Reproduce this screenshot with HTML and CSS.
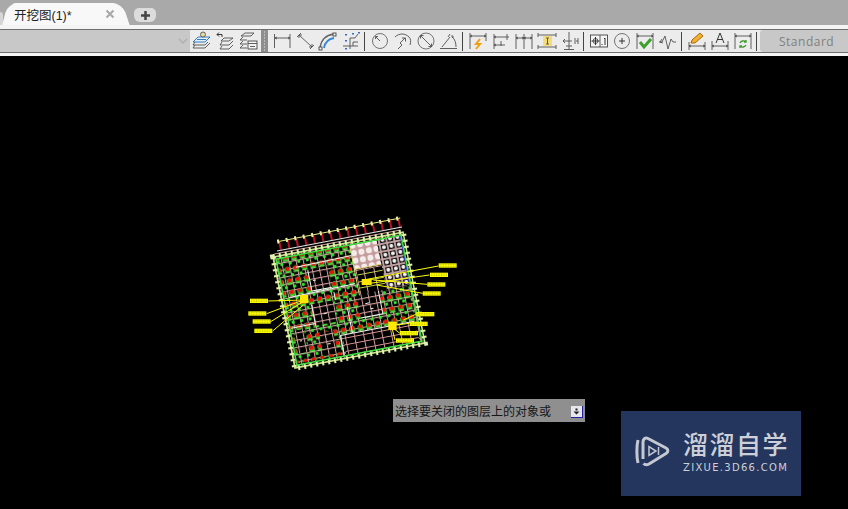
FILE: index.html
```html
<!DOCTYPE html>
<html lang="en">
<head>
    <meta charset="UTF-8">
    <meta name="viewport" content="width=device-width, initial-scale=1.0">
    <title>开挖图(1)</title>
    <link rel="stylesheet" href="styles.css">
</head>
<body>
    <!-- Drawing tabs -->
    <div class="tab-bar">
        <div class="tab-prev"></div>
        <div class="tab">
            <span class="tab-title">开挖图(1)*</span>
            <svg class="tab-close" width="10" height="10" viewBox="0 0 10 10"><path d="M1.500 1.500l7 7M8.500 1.500l-7 7"/></svg>
        </div>
        <div class="tab-add">
            <svg width="11" height="11" viewBox="0 0 11 11"><path d="M5.500 1v9M1 5.500h9"/></svg>
        </div>
    </div>

    <!-- Toolbar -->
    <div class="tool-strip">
        <div class="toolbar">
            <div class="combo">
                <svg width="10" height="6" viewBox="0 0 10 6"><path d="M1 1l4 4 4-4"/></svg>
            </div>

            <div class="tool"><svg viewBox="0 0 20 20">
                <path class="dk" d="M3 14L1 17h12l5-5M3 11L1 14h12l3-3"/>
                <path class="bl" d="M6 6L1 11h12l5-5zM5 8.500h9"/>
                <circle class="ac" cx="11" cy="3.500" r="2.500"/>
            </svg></div>
            <div class="tool"><svg viewBox="0 0 20 20">
                <path class="dk" d="M9 7h9l-4 3H6zM7 11l-2 3h9l4-4M7 15l-2 3h9l4-4"/>
                <path class="bk" d="M7 3.500H2M4 1.500l-2 2 2 2M7 3.500V6"/>
            </svg></div>
            <div class="tool"><svg viewBox="0 0 20 20">
                <path class="dk" d="M7 2h9l-3 3H3zM5 6L2 9h7M5 10l-3 3h7M5 14l-3 3h7"/>
                <rect class="bx" x="10" y="10" width="9" height="8"/>
                <path class="dk" d="M10 12.500h9M12 15.500h5"/>
            </svg></div>

            <div class="grip"></div>

            <div class="tool"><svg viewBox="0 0 20 20"><path class="dk" d="M2.500 3v14M18 3v14M3 7h15M5 6L3 7l2 1M16 6l2 1-2 1"/></svg></div>
            <div class="tool"><svg viewBox="0 0 20 20"><path class="dk" d="M6 2L2 6M19 14l-4 4M4 4l13 12M4 7V4h3M14 16h3v-3"/></svg></div>
            <div class="tool"><svg viewBox="0 0 20 20">
                <path class="gr" d="M2 17C3 9 8 4 16 3"/>
                <path class="bl2" d="M6 17C7 11 10 8 16 7"/>
                <rect class="bx" x="15" y="2" width="3" height="3"/>
                <rect class="bx" x="1" y="16" width="3" height="3"/>
            </svg></div>
            <div class="tool"><svg viewBox="0 0 20 20">
                <path class="dk" d="M2 15h15M9 18V7h5l3-4M12 15v-4h5"/>
                <path class="dots" d="M5 3v1.500M5 9v1.500M5 17v1.500M12 2v1.500M18 1v1.500"/>
            </svg></div>

            <div class="sep"></div>

            <div class="tool"><svg viewBox="0 0 20 20"><circle class="gy" cx="10" cy="10" r="7.500"/><path class="dk" d="M10 10L5.500 5.500M5.500 8V5.500H8"/></svg></div>
            <div class="tool"><svg viewBox="0 0 20 20"><path class="dk" d="M2 6C6 2 12 2 16 6c2 2 2 5 1 8M5 18l4-4-2-2 5-5M9 7h3.500v3.500"/></svg></div>
            <div class="tool"><svg viewBox="0 0 20 20"><circle class="gy" cx="10" cy="10" r="8"/><path class="dk" d="M4.500 4.500l11 11M4.500 7.500v-3h3M15.500 12.500v3h-3"/></svg></div>
            <div class="tool"><svg viewBox="0 0 20 20"><path class="dk" d="M1 17.500h17M3 16L11 6M11 3L9 6M13 6c3 2 4 6 4 10M12 5h2v2"/></svg></div>

            <div class="sep"></div>

            <div class="tool"><svg viewBox="0 0 20 20">
                <path class="dk" d="M2 2v16M18 2v8M2 5h16M4 4L2 5l2 1M16 4l2 1-2 1"/>
                <path class="or" d="M12 8l-4 5h4l-4 5"/>
            </svg></div>
            <div class="tool"><svg viewBox="0 0 20 20"><path class="dk" d="M3 3v15M16 3v6M3 6h15M3 14h11M10 10v5M5 5L3 6l2 1M5 13l-2 1 2 1"/></svg></div>
            <div class="tool"><svg viewBox="0 0 20 20"><path class="dk" d="M2 3v15M10 3v15M18 3v15M2 7h16M4 6L2 7l2 1M8 6l2 1-2 1M12 6l-2 1 2 1M16 6l2 1-2 1"/></svg></div>
            <div class="tool"><svg viewBox="0 0 20 20">
                <path class="dk" d="M1 4h18M1 16h18M1 2v4M19 2v4M1 14v4M19 14v4"/>
                <rect class="yl" x="6" y="5" width="9" height="10"/>
                <path class="dk" d="M9 7h3M10.500 7v6M9 13h3"/>
            </svg></div>
            <div class="tool"><svg viewBox="0 0 20 20"><path class="dk" d="M9 1v18M4 18.500h10M9 10H3M5 8l-2 2 2 2M9 10h3M15 7v6M18 7v6M16 10h2M6 15h6"/></svg></div>

            <div class="sep"></div>

            <div class="tool"><svg viewBox="0 0 20 20">
                <rect class="bx" x="1.500" y="4" width="17" height="12"/>
                <path class="dk" d="M11 4v12"/>
                <circle class="dk" cx="6.500" cy="10" r="2.500"/>
                <path class="bk" d="M2.500 10h8M6.500 6v8M13 14v-1M16 7v7M15 8l1-1"/>
            </svg></div>
            <div class="tool"><svg viewBox="0 0 20 20"><circle class="gy" cx="10" cy="10" r="7.500"/><path class="bk" d="M10 7v6M7 10h6"/></svg></div>
            <div class="tool"><svg viewBox="0 0 20 20">
                <path class="dk" d="M2 2v16M18 2v16M2 5h16M4 4L2 5l2 1M16 4l2 1-2 1"/>
                <path class="ck" d="M5 11l4 5 7-8"/>
            </svg></div>
            <div class="tool"><svg viewBox="0 0 20 20"><path class="dk" d="M1 11h3l3-6 3 13 3-10 2 3h3M4 8l-2 3 3 1"/></svg></div>

            <div class="sep"></div>

            <div class="tool"><svg viewBox="0 0 20 20">
                <path class="dk" d="M2 11v8M18 11v8M2 15h16M4 14l-2 1 2 1M16 14l2 1-2 1"/>
                <path class="pen" d="M4 12l1-3 8-7 3 3-8 7z"/>
            </svg></div>
            <div class="tool"><svg viewBox="0 0 20 20"><path class="dk" d="M2 10v9M18 10v9M2 15h16M4 14l-2 1 2 1M16 14l2 1-2 1"/><path class="bk" d="M6 12L10 2l4 10M7.500 8.500h5"/></svg></div>
            <div class="tool"><svg viewBox="0 0 20 20">
                <path class="dk" d="M2 2v16M18 2v16M2 5h16M4 4L2 5l2 1M16 4l2 1-2 1"/>
                <path class="ck2" d="M7 12c1-2 4-3 6-1M13 9v2h-2M13 14c-1 2-4 3-6 1M7 17v-2h2"/>
            </svg></div>

            <div class="sep"></div>

            <div class="style-box">Standard</div>
        </div>
    </div>

    <!-- Model space -->
    <div class="canvas">
        <svg class="drawing" width="230" height="175" viewBox="0 0 690 525">
            <defs>
                <pattern id="grid" width="7" height="7" patternUnits="userSpaceOnUse">
                    <path d="M0 .5h7M.5 0v7" fill="none" stroke="#cf9c9c" stroke-width="1"/>
                </pattern>
                <pattern id="grid2" width="9" height="6.500" patternUnits="userSpaceOnUse">
                    <path d="M0 .5h9M.5 0v6.500" fill="none" stroke="#d49696" stroke-width="1"/>
                </pattern>
                <pattern id="nodes" width="8.500" height="11.500" patternUnits="userSpaceOnUse">
                    <circle cx="3" cy="3.500" r="3" fill="#22d422"/>
                    <rect x="1" y="1" width="4" height="3.500" fill="#ee0c0c"/>
                    <circle cx="7" cy="9" r="1.600" fill="#2bea2b"/>
                    <path d="M0 6.500h6" stroke="#a4f27a" stroke-width=".8"/>
                </pattern>
                <pattern id="pinkhatch" width="7.500" height="7.500" patternUnits="userSpaceOnUse">
                    <rect width="7.500" height="7.500" fill="#c49a9a"/>
                    <circle cx="3.700" cy="3.700" r="3" fill="#f4ecec"/>
                </pattern>
                <pattern id="darkhatch" width="7.500" height="7.500" patternUnits="userSpaceOnUse">
                    <rect width="7.500" height="7.500" fill="#bfa0a0"/>
                    <rect x="1" y="1" width="5.500" height="5.500" fill="#000"/>
                    <circle cx="3.700" cy="3.700" r="2" fill="#f0f0f0"/>
                </pattern>
                <g id="lbl">
                    <rect width="54" height="13" fill="#ffff00"/>
                    <path d="M3 4h48M3 9h48" stroke="#8a8a00" stroke-width="1.500" stroke-dasharray="3 2"/>
                </g>
            </defs>

            <!-- plan, sheared to follow the rotated view -->
            <g transform="matrix(3 -.576 .594 3 99 156)">
                <rect x="0" y="0" width="130" height="111" fill="#000"/>
                <rect x="0" y="0" width="130" height="111" fill="url(#grid)"/>
                <path d="M2 3h74v50h50v36H52v18H3z" fill="url(#nodes)"/>

                <g class="room">
                    <rect x="31" y="19" width="20" height="21"/>
                    <rect x="28" y="53" width="22" height="21"/>
                    <rect x="73" y="52" width="22" height="23"/>
                    <rect x="6" y="75" width="10" height="23"/>
                    <rect x="30" y="82" width="14" height="22"/>
                </g>
                <g class="room-grid">
                    <rect x="31" y="19" width="20" height="21"/>
                    <rect x="28" y="53" width="22" height="21"/>
                    <rect x="73" y="52" width="22" height="23"/>
                    <rect x="6" y="75" width="10" height="23"/>
                    <rect x="30" y="82" width="14" height="22"/>
                </g>
                <path class="flr" d="M34 30h3M38 64h3M80 62h4M84 68h3M36 94h3M10 86h2"/>
                <path class="wall" d="M8 42l66-1M20 14l56-1M52 45v8M62 62v26M4 72h24M31 19v21h20M28 53v21M95 52v23h-22"/>

                <rect x="52" y="88" width="73" height="20" fill="#000"/>
                <rect x="52" y="88" width="73" height="20" fill="url(#grid2)"/>
                <path class="wall" d="M50 88h74M50 88v20"/>

                <rect x="76" y="3" width="27" height="24" fill="url(#pinkhatch)"/>
                <rect x="103" y="3" width="23" height="49" fill="url(#darkhatch)"/>
                <path d="M127 3v50" stroke="#2222e0" stroke-width="1.800"/>
                <path d="M76 27h27M76 3v50" stroke="#e0d070" stroke-width="1"/>
                <rect x="78" y="29" width="25" height="23" fill="#000"/>
                <path d="M78 33h25M78 40h25M78 46h25" stroke="#c4d83a" stroke-width=".9"/>
                <path d="M85 29v23M95 29v23" stroke="#dba6a6" stroke-width=".9"/>

                <path d="M7 -14H130" stroke="#e4ec8c" stroke-width="1"/>
                <path d="M8 -9.500H130" stroke="#b80f24" stroke-width="8" stroke-dasharray="2 6.500"/>
                <path d="M7 -14H130" stroke="#eef0a0" stroke-width="4" stroke-dasharray="2 6.500"/>
                <path d="M5 -5H130" stroke="#e8e8e8" stroke-width="1"/>
                <path d="M2 -2.500H128" stroke="#cf9c9c" stroke-width="1"/>

                <rect x="0" y="0" width="130" height="111" fill="none" stroke="#cbe58d" stroke-width="1.500"/>
                <rect x="0" y="0" width="130" height="111" fill="none" stroke="#e2f2ac" stroke-width="5.500" stroke-dasharray="2 4"/>
                <rect x="2.500" y="2.500" width="125" height="106" fill="none" stroke="#3fe03f" stroke-width="1.500"/>
            </g>

            <!-- leaders and labels -->
            <path class="leader" d="M370 225L595 183M390 235L568 210M400 225L562 238M410 240L548 265M490 345L527 328M470 360L508 355M460 370L480 385M455 365L465 405M85 288L190 285M80 326L190 285M92 350L190 290M98 378L190 300"/>
            <path d="M365 222h30v18h-30zM445 350h25v25h-25zM180 270h25v25h-25z" fill="#ffe800"/>
            <use href="#lbl" x="596" y="175"/>
            <use href="#lbl" x="570" y="203"/>
            <use href="#lbl" x="562" y="232"/>
            <use href="#lbl" x="548" y="259"/>
            <use href="#lbl" x="529" y="321"/>
            <use href="#lbl" x="509" y="350"/>
            <use href="#lbl" x="480" y="378"/>
            <use href="#lbl" x="468" y="400"/>
            <use href="#lbl" x="30" y="281"/>
            <use href="#lbl" x="25" y="319"/>
            <use href="#lbl" x="38" y="343"/>
            <use href="#lbl" x="43" y="371"/>
        </svg>

        <div class="prompt">
            <span>选择要关闭的图层上的对象或</span>
            <svg width="12" height="12" viewBox="0 0 12 12">
                <rect width="12" height="12" fill="#2020a0"/>
                <rect width="11" height="11" fill="#e8e8ec"/>
                <path d="M4.500 2.500h2v2h-2zM2.500 5.500h6l-3 3z" fill="#222"/>
            </svg>
        </div>

        <div class="brand">
            <svg class="brand-logo" width="36" height="36" viewBox="0 0 36 36">
                <path d="M3 7C1.500 13 1.500 24 3 30"/>
                <path d="M8 26V9c0-3 2.500-5 5-3.500L31 15c2.500 1.500 2.500 4 0 5.500L14 31c-2 1-4 1-5.500-.5"/>
                <path class="brand-play" d="M14 13.500v9l7-4.500z"/>
                <path class="brand-play" d="M23.500 14v8"/>
            </svg>
            <div class="brand-text">
                <div class="brand-name">溜溜自学</div>
                <div class="brand-url">ZIXUE.3D66.COM</div>
            </div>
        </div>
    </div>
</body>
</html>
```

FILE: styles.css
```css
html, body {
    height: 100%;
}
body {
    margin: 0;
    padding: 0;
    display: flex;
    flex-direction: column;
    overflow: hidden;
    background-color: #000;
    font-family: "Liberation Sans", "Noto Sans CJK SC", sans-serif;
}

/* tabs */
.tab-bar {
    height: 25px;
    display: flex;
    align-items: flex-end;
    background-color: #a9a9a9;
}
.tab-prev {
    width: 3px;
    height: 13px;
    background-color: #d6d6d6;
    border-radius: 0 4px 0 0;
}
.tab {
    position: relative;
    width: 104px;
    height: 22px;
    margin-left: 9px;
    display: flex;
    align-items: center;
    justify-content: space-between;
    background-color: #f8f8f8;
    border-radius: 4px 4px 0 0;
}
.tab::before,
.tab::after {
    content: "";
    position: absolute;
    top: 0;
    bottom: 0;
    background-color: #f8f8f8;
}
.tab::before {
    left: -7px;
    width: 14px;
    border-radius: 10px 0 0 0;
    transform: skewX(-14deg);
}
.tab::after {
    right: -10px;
    width: 16px;
    border-radius: 0 10px 0 0;
    transform: skewX(18deg);
}
.tab-title {
    position: relative;
    z-index: 1;
    margin-left: 2px;
    font-size: 12.500px;
    color: #222;
    white-space: nowrap;
}
.tab-close {
    position: relative;
    z-index: 1;
    margin-right: 1px;
}
.tab-close path {
    fill: none;
    stroke: #a8a8a8;
    stroke-width: 2;
}
.tab-add {
    width: 22px;
    height: 14px;
    margin-left: 18px;
    margin-bottom: 3px;
    display: flex;
    align-items: center;
    justify-content: center;
    background-color: #dcdcdc;
    border-radius: 5px 5px 6px 6px;
}
.tab-add path {
    fill: none;
    stroke: #444;
    stroke-width: 2.500;
}

/* toolbar */
.tool-strip {
    height: 31px;
    box-sizing: border-box;
    padding: 4px 0 3px;
    background-color: #f4f4f4;
}
.toolbar {
    height: 24px;
    box-sizing: border-box;
    display: flex;
    align-items: center;
    background-color: #ececec;
    border-top: 1px solid #6e6e6e;
    border-bottom: 1px solid #6e6e6e;
}
.combo {
    width: 190px;
    height: 100%;
    box-sizing: border-box;
    padding-right: 2px;
    display: flex;
    align-items: center;
    justify-content: flex-end;
    background-color: #c8c8c8;
}
.combo path {
    fill: none;
    stroke: #b0b0b0;
    stroke-width: 1.500;
}
.tool {
    width: 23px;
    height: 20px;
    display: flex;
    align-items: center;
    justify-content: center;
}
.tool svg {
    width: 20px;
    height: 20px;
    fill: none;
    stroke-width: .9;
}
.grip {
    width: 7px;
    height: 100%;
    margin: 0 2px;
    background-color: #8e8e8e;
    background-image: radial-gradient(#e8e8e8 35%, transparent 40%);
    background-size: 3px 3px;
    background-position: center;
    background-repeat: repeat-y;
}
.sep {
    width: 1px;
    height: 19px;
    margin: 0 3px 0 2px;
    background-color: #444;
}
.style-box {
    flex: 1;
    height: 100%;
    padding-left: 19px;
    display: flex;
    align-items: center;
    background-color: #c8c8c8;
    border-radius: 3px 0 0 3px;
    font-family: "Open Sans", sans-serif;
    font-size: 12px;
    letter-spacing: .5px;
    color: #808080;
}

/* icon strokes */
.dk { stroke: #505050; }
.bk { stroke: #222; }
.gy { stroke: #666; }
.gr { stroke: #666; stroke-width: 1.300; }
.bl { stroke: #1f6fb8; fill: #e4eff8; }
.bl2 { stroke: #2f86d8; stroke-width: 1.800; }
.ac { stroke: #555; fill: #e8d9a0; }
.bx { stroke: #444; fill: #f4f4f4; }
.dots { stroke: #2060c0; stroke-width: 1.800; }
.or { stroke: #f0a010; stroke-width: 2; }
.yl { stroke: none; fill: #f4dc78; }
.ck { stroke: #3ca02c; stroke-width: 3; }
.ck2 { stroke: #3c9a2c; stroke-width: 1.300; }
.pen { stroke: #a86000; fill: #f0b030; }

/* model space */
.canvas {
    flex: 1;
    position: relative;
    background-color: #000;
}
.drawing {
    position: absolute;
    left: 240px;
    top: 149px;
}
.room rect {
    fill: #000;
}
.room-grid rect {
    fill: url(#grid);
}
.wall {
    fill: none;
    stroke: #f4f4f4;
    stroke-width: 1;
}
.flr {
    fill: none;
    stroke: #e8e8e8;
    stroke-width: 1;
}
.leader {
    fill: none;
    stroke: #ffff00;
    stroke-width: 3;
}
.prompt {
    position: absolute;
    left: 393px;
    top: 343px;
    width: 192px;
    height: 23px;
    box-sizing: border-box;
    padding: 0 2px;
    display: flex;
    align-items: center;
    justify-content: space-between;
    background-color: #8f8f8f;
    font-size: 12px;
    color: #161616;
}
.prompt svg {
    margin-top: 3px;
}
.brand {
    position: absolute;
    left: 621px;
    top: 355px;
    width: 180px;
    height: 85px;
    box-sizing: border-box;
    padding: 19px 0 0 14px;
    display: flex;
    gap: 12px;
    background-color: #24365e;
    color: #cdd0d8;
}
.brand-logo {
    margin-top: 3px;
    fill: none;
    stroke: #c4c8d2;
    stroke-width: 3;
}
.brand-logo .brand-play {
    stroke-width: 1.500;
}
.brand-name {
    font-family: "Noto Sans CJK SC", sans-serif;
    font-size: 25px;
    font-weight: 500;
    line-height: 27px;
    letter-spacing: 1.500px;
    white-space: nowrap;
}
.brand-url {
    margin-top: 5px;
    font-family: "DejaVu Sans", sans-serif;
    font-size: 10px;
    line-height: 11px;
    letter-spacing: 1.300px;
    white-space: nowrap;
}
```
